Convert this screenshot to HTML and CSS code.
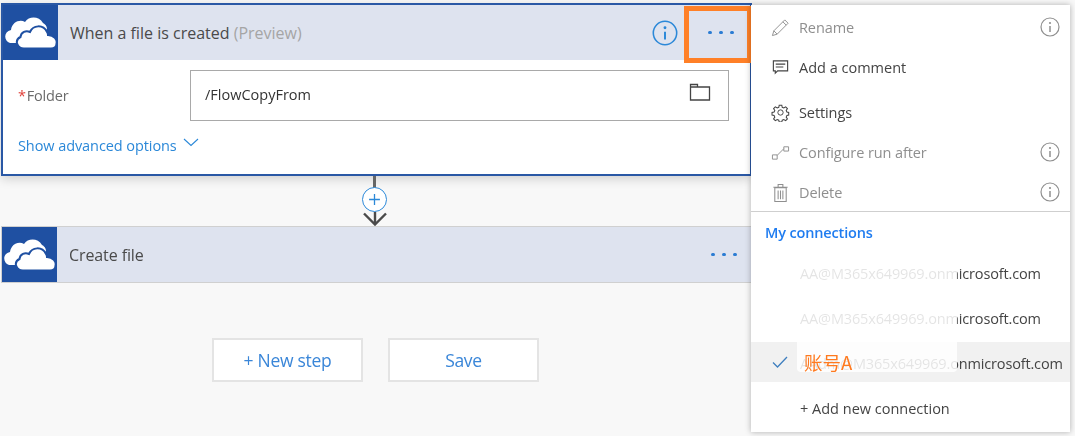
FILE: index.html
```html
<!DOCTYPE html>
<html lang="en">
<head>
<meta charset="utf-8">
<title>Flow designer</title>
<link rel="stylesheet" href="styles.css">
</head>
<body>
<svg class="defs" width="0" height="0" aria-hidden="true">
  <symbol id="cloud" viewBox="0 0 55 55">
    <path fill="#fff" d="M7 38C1 36 0 27 8 25C9 17 17 14 22 17C26 11 36 11 40 18C42 19 44 21 44 24L30 38Z"/>
    <path fill="#fff" stroke="#1f50a2" stroke-width="2" d="M21 43.500C14 43.500 11 35 17.500 32C18 27 23 25 27 27C30 20 40 19 44 27C45 28 45 29 45 30C51 30 54.500 35 53.500 38.500C53.500 41.500 51 43.500 48 43.500Z"/>
  </symbol>
  <symbol id="info" viewBox="0 0 20 20">
    <circle cx="10" cy="10" r="9" fill="none" stroke="currentColor" stroke-width="1.200"/>
    <circle cx="10" cy="6" r="1.100" fill="currentColor"/>
    <path d="M10 9v6" stroke="currentColor" stroke-width="1.500"/>
  </symbol>
</svg>

<main class="canvas">
  <section class="card card-open">
    <header class="card-head">
      <span class="tile"><svg class="cloud"><use href="#cloud"/></svg></span>
      <h2 class="card-title">When a file is created <span class="muted">(Preview)</span></h2>
      <svg class="head-info"><use href="#info"/></svg>
      <span class="dots"><i></i><i></i><i></i></span>
    </header>
    <div class="card-body">
      <div class="field">
        <label class="field-label"><span class="req">*</span>Folder</label>
        <div class="input">
          <span>/FlowCopyFrom</span>
          <svg class="folder" viewBox="0 0 22 18"><path d="M1.500 4V1.500h7V4M1.500 4h19v13h-19z" fill="none" stroke="#444" stroke-width="1.300"/></svg>
        </div>
      </div>
      <a class="advanced">Show advanced options
        <svg class="chev" viewBox="0 0 16 9"><path d="M1 1l7 6.500L15 1" fill="none" stroke="currentColor" stroke-width="1.100"/></svg>
      </a>
    </div>
  </section>

  <div class="connector">
    <span class="line"></span>
    <span class="plus">
      <svg viewBox="0 0 12 12"><path d="M6 1v10M1 6h10" stroke="#2b88d8" stroke-width="1.200"/></svg>
    </span>
    <svg class="arrow" viewBox="0 0 26 14"><path d="M13 0v13M2 1.500l11 11 11-11" fill="none" stroke="#4a4a4a" stroke-width="2.400"/></svg>
  </div>

  <section class="card">
    <header class="card-head">
      <span class="tile"><svg class="cloud"><use href="#cloud"/></svg></span>
      <h2 class="card-title title-b">Create file</h2>
      <span class="dots"><i></i><i></i><i></i></span>
    </header>
  </section>

  <div class="actions">
    <button class="btn">+ New step</button>
    <button class="btn">Save</button>
  </div>
</main>

<div class="highlight"></div>

<aside class="menu">
  <div class="item off">
    <svg class="ico" viewBox="0 0 20 20"><path d="M1.500 18.500l1.500-5L14.500 2l3.500 3.500L6.500 17zM3 13.500L6.500 17M12.500 4l3.500 3.500" fill="none" stroke="currentColor"/></svg>
    <span class="label">Rename</span>
    <svg class="item-info"><use href="#info"/></svg>
  </div>
  <div class="item gap">
    <svg class="ico" viewBox="0 0 20 20"><path d="M2.500 3h15v10.500H7L4.500 16v-2.500h-2zM5 6.500h10M5 9.500h8" fill="none" stroke="currentColor" stroke-width="1.200"/></svg>
    <span class="label">Add a comment</span>
  </div>
  <div class="item">
    <svg class="ico" viewBox="0 0 20 20"><circle cx="10" cy="10" r="2.800" fill="none" stroke="currentColor"/><path d="M8.500 1.500h3l.5 2.500 1.800.8 2.200-1.400 2 2-1.400 2.200.8 1.900 2.100.5v3l-2.100.5-.8 1.800 1.400 2.200-2 2-2.200-1.400-1.800.8-.5 2.100h-3l-.5-2.100-1.800-.8-2.200 1.400-2-2 1.400-2.200-.8-1.800-2.400-.5v-3l2.400-.5.8-1.900L2 5.400l2-2 2.200 1.400L8 4z" transform="translate(.9 .9) scale(.91)" fill="none" stroke="currentColor" stroke-width="1.200"/></svg>
    <span class="label">Settings</span>
  </div>
  <div class="item off">
    <svg class="ico" viewBox="0 0 20 20"><path d="M1.500 12.500h5v4.500h-5zM13.500 4h5v4.500h-5zM6.500 13l7-7" fill="none" stroke="currentColor"/></svg>
    <span class="label">Configure run after</span>
    <svg class="item-info"><use href="#info"/></svg>
  </div>
  <div class="item off">
    <svg class="ico" viewBox="0 0 20 20"><path d="M4 5h12v14.500H4zM2.500 4.500h15M7.500 4.500v-3h5v3M7.500 8v9M10 8v9M12.500 8v9" fill="none" stroke="currentColor" stroke-width="1.100"/></svg>
    <span class="label">Delete</span>
    <svg class="item-info"><use href="#info"/></svg>
  </div>
  <div class="section-title">My connections</div>
  <div class="conn"><span class="label">AA@M365x649969.onmicrosoft.com</span></div>
  <div class="conn"><span class="label">AA@M365x649969.onmicrosoft.com</span></div>
  <div class="conn conn-on">
    <svg class="check" viewBox="0 0 16 12"><path d="M1 6.500L5.500 11 15 1" fill="none" stroke="#3f7fbf" stroke-width="1.300"/></svg>
    <span class="label">AAdm@M365x649969.onmicrosoft.com</span>
  </div>
  <div class="conn conn-add"><span class="label">+ Add new connection</span></div>
  <div class="mask"><span class="mask-note">账号A</span></div>
</aside>
</body>
</html>
```

FILE: styles.css
```css
* { box-sizing: border-box; }
html, body { margin: 0; height: 100%; }
body {
  position: relative;
  width: 1075px;
  height: 436px;
  overflow: hidden;
  background: #f8f8f8;
  font-family: "Open Sans", "Noto Sans", sans-serif;
  color: #444;
}
.defs { position: absolute; }

.canvas {
  width: 751px;
  margin-left: 1px;
  padding-top: 3px;
  display: flex;
  flex-direction: column;
  filter: blur(.4px);
}

.card { background: #fff; box-shadow: 0 0 0 1px #d0d0d0; }
.card-open {
  height: 173px;
  border: 2px solid #2a58a5;
  box-shadow: 0 3px 10px rgba(0,0,0,.16);
}
.card-head {
  height: 55px;
  background: #dee3ef;
  display: flex;
  align-items: center;
}
.card:not(.card-open) { margin-left: 1px; height: 55px; }
.tile {
  width: 55px;
  height: 55px;
  background: #1f50a2;
  flex: none;
}
.cloud { display: block; width: 55px; height: 55px; }
.card-title {
  margin: 0 0 0 12px;
  font-size: 16px;
  font-weight: 400;
  color: #4a4a4a;
  flex: 1;
}
.title-b { letter-spacing: -.1px; }
.muted { color: #a5a5a5; }
.head-info { width: 26px; height: 26px; color: #2b88d8; margin-right: 19px; }
.dots { display: flex; gap: 7.500px; width: 55px; padding-left: 14px; flex: none; }
.dots i { width: 3.500px; height: 3.500px; border-radius: 50%; background: #2b7cd3; }
.card-open .dots { padding-left: 11px; width: 53px; }

.card-body { padding: 10px 21px 0 15px; }
.field { display: flex; align-items: center; }
.field-label { width: 172px; font-size: 14.500px; color: #6b6b6b; letter-spacing: -.2px; }
.req { color: #e0413a; margin-right: 1px; }
.input {
  flex: 1;
  height: 51px;
  border: 1px solid #a9a9a9;
  padding: 0 17px 2px 14px;
  display: flex;
  align-items: center;
  justify-content: space-between;
  font-size: 14.500px;
  color: #333;
}
.folder { width: 22px; height: 18px; margin-top: -5px; }
.advanced {
  display: flex;
  align-items: center;
  gap: 6px;
  margin-top: 15px;
  font-size: 14.500px;
  letter-spacing: -.08px;
  color: #2b88d8;
}
.chev { width: 16px; height: 9px; margin-top: -6px; }

.connector {
  height: 51px;
  position: relative;
}
.line { position: absolute; left: 372px; top: 0; width: 3px; height: 12px; background: #666; }
.plus {
  position: absolute;
  left: 361px;
  top: 11px;
  width: 25px;
  height: 25px;
  border: 1px solid #2b88d8;
  border-radius: 50%;
  background: #fff;
  display: flex;
  align-items: center;
  justify-content: center;
}
.plus svg { width: 13px; height: 13px; }
.arrow { position: absolute; left: 361px; top: 36px; width: 26px; height: 14px; }

.actions {
  display: flex;
  gap: 25px;
  margin-top: 56px;
  margin-left: 211px;
}
.btn {
  width: 151px;
  height: 44px;
  padding-top: 1px;
  background: #fff;
  border: 2px solid #e4e4e4;
  font: inherit;
  font-size: 17.500px;
  letter-spacing: -.3px;
  color: #3a86d8;
}

.highlight {
  position: absolute;
  left: 684px;
  top: 6px;
  width: 68px;
  height: 57px;
  border: 5px solid #ff8027;
}

.menu {
  position: absolute;
  left: 751px;
  top: 5px;
  width: 319px;
  height: 427px;
  padding-top: 2px;
  background: #fff;
  box-shadow: 0 0 6px rgba(0,0,0,.3);
  font-size: 14.500px;
  color: #444;
  filter: blur(.4px);
}
.item {
  height: 40px;
  display: flex;
  align-items: center;
  padding: 0 10px 0 20px;
  letter-spacing: -.1px;
}
.item.gap { margin-bottom: 5px; letter-spacing: 0; }
.item.off { color: #8f8f8f; }
.ico { width: 19px; height: 19px; flex: none; margin-right: 9px; }
.label { flex: 1; white-space: nowrap; }
.item-info { width: 20px; height: 20px; color: #8f8f8f; flex: none; }
.section-title {
  height: 41px;
  padding: 11px 14px 0 14px;
  border-top: 1px solid #cfcfcf;
  margin-top: -1px;
  font-weight: 600;
  letter-spacing: -.15px;
  color: #1f7cf0;
}
.conn {
  height: 40px;
  margin-bottom: 5px;
  padding: 2px 0 0 49px;
  display: flex;
  align-items: center;
  position: relative;
  letter-spacing: -.15px;
}
.conn-add { letter-spacing: 0; }
.conn-on { background: #f1f1f1; }
.check { position: absolute; left: 21px; top: 14px; width: 16px; height: 12px; }
.mask {
  position: absolute;
  left: 46px;
  top: 252px;
  width: 160px;
  height: 115px;
  background: rgba(255,255,255,.86);
  border-radius: 0 0 4px 4px;
}
.mask-note {
  position: absolute;
  left: 7px;
  bottom: -3px;
  font-family: "Noto Sans CJK SC", sans-serif;
  font-size: 18.500px;
  letter-spacing: 0;
  color: #ff7a1f;
}
```
